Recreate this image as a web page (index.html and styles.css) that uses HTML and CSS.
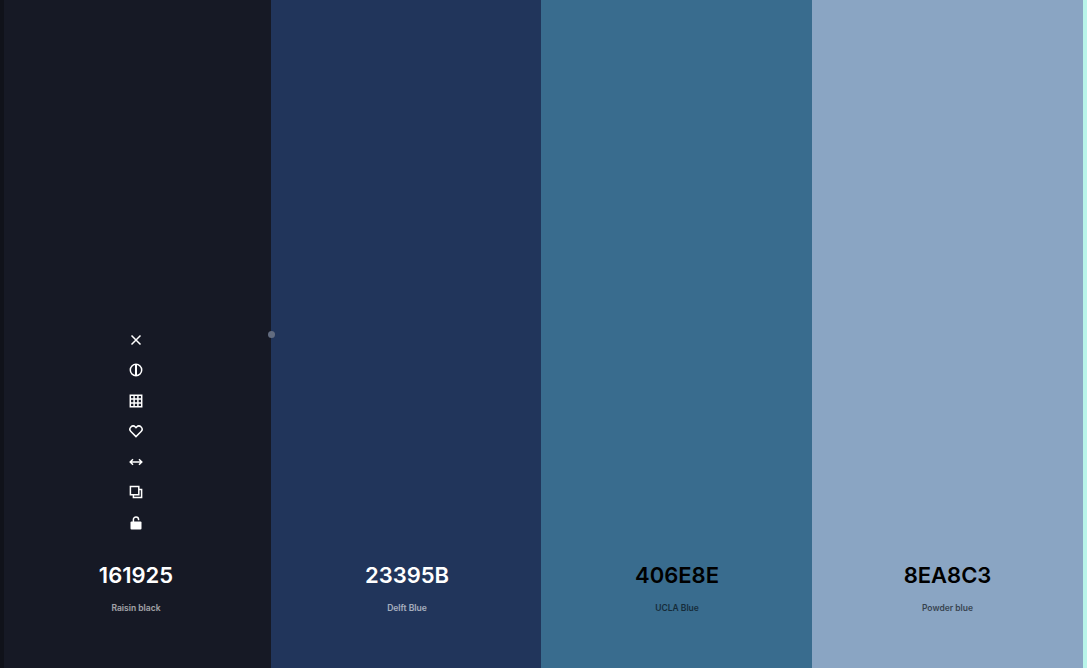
FILE: index.html
```html
<!DOCTYPE html>
<html lang="en">
<head>
  <meta charset="UTF-8" />
  <title>Palette</title>
  <link rel="stylesheet" href="styles.css">
</head>
<body>
  <main class="palette">
    <section class="swatch swatch-raisin">
      <div class="tools">
        <svg class="tool" viewBox="0 0 16 16"><path d="M3.5 3.5l9 9M12.5 3.5l-9 9" /></svg>
        <svg class="tool" viewBox="0 0 16 16"><circle cx="8" cy="8" r="5.7" /><path class="bar" d="M8 2.3v11.4" /></svg>
        <svg class="tool" viewBox="0 0 16 16"><path d="M2.3 2.3h11.4v11.4H2.3zM2.3 6.1h11.4M2.3 9.9h11.4M6.1 2.3v11.4M9.9 2.3v11.4" /></svg>
        <svg class="tool" viewBox="0 0 16 16"><path d="M8 13.6L2.9 8.5a3.2 3.2 0 0 1 0-4.5 3.2 3.2 0 0 1 4.5 0l.6.6.6-.6a3.2 3.2 0 0 1 4.5 0 3.2 3.2 0 0 1 0 4.5z" /></svg>
        <svg class="tool" viewBox="0 0 16 16"><path d="M2.5 8h11M5 5.2L2.2 8 5 10.8M11 5.2L13.8 8 11 10.8" /></svg>
        <svg class="tool" viewBox="0 0 16 16"><path d="M2.4 2.4h8.4v8.4H2.4zM5.4 10.8v2.8h8.2V5.4h-2.8" /></svg>
        <svg class="tool solid" viewBox="0 0 16 16"><path d="M5.4 7V4.6a2.6 2.6 0 0 1 5.2 0v.6" /><rect x="2.5" y="6.4" width="11" height="8" rx="1" /></svg>
      </div>
      <h2 class="hex">161925</h2>
      <p class="name">Raisin black</p>
    </section>

    <section class="swatch swatch-delft">
      <h2 class="hex">23395B</h2>
      <p class="name">Delft Blue</p>
    </section>

    <section class="swatch swatch-ucla dark-text">
      <h2 class="hex">406E8E</h2>
      <p class="name">UCLA Blue</p>
    </section>

    <section class="swatch swatch-powder dark-text">
      <h2 class="hex">8EA8C3</h2>
      <p class="name">Powder blue</p>
    </section>

    <span class="handle"></span>
    <div class="edge-left"></div>
  </main>

  <div class="edge-right"></div>
</body>
</html>
```

FILE: styles.css
```css
html, body { height: 100%; }
body {
  margin: 0;
  display: flex;
  overflow: hidden;
  background-color: #161925;
  font-family: Inter, sans-serif;
}
.edge-left {
  position: absolute;
  left: 0;
  top: 0;
  bottom: 0;
  width: 4px;
  background-color: #10121a;
}
.edge-right { width: 4px; background-color: #b9f5ea; }

.palette {
  flex: 1;
  display: grid;
  grid-template-columns: 271px 270px 271px 271px;
  position: relative;
}
.swatch {
  display: flex;
  flex-direction: column;
  justify-content: flex-end;
  align-items: center;
  padding-left: 1px;
  padding-bottom: 54px;
  color: #ffffff;
}
.swatch-raisin { background-color: #161925; }
.swatch-delft { background-color: #21355b; padding-left: 2px; }
.swatch-ucla { background-color: #396c8e; }
.swatch-powder { background-color: #8aa5c3; padding-left: 0; }
.swatch.dark-text { color: #000000; }

.tools {
  display: flex;
  flex-direction: column;
  align-items: center;
  gap: 14.5px;
  margin-bottom: 30.5px;
}
.tool {
  display: block;
  width: 16px;
  height: 16px;
  fill: none;
  stroke: #ffffff;
  stroke-width: 1.5;
}
.tool .bar { stroke-width: 2; }
.tool.solid rect { fill: #ffffff; stroke: none; }

.hex {
  margin: 0;
  font-size: 22px;
  line-height: 28px;
  font-weight: 600;
}
.name {
  margin: 14px 0 0;
  font-size: 8.5px;
  line-height: 11px;
  font-weight: 600;
  opacity: 0.6;
}

.handle {
  position: absolute;
  left: 268px;
  top: 331px;
  width: 7px;
  height: 7px;
  border-radius: 50%;
  background-color: #626c80;
}
```
